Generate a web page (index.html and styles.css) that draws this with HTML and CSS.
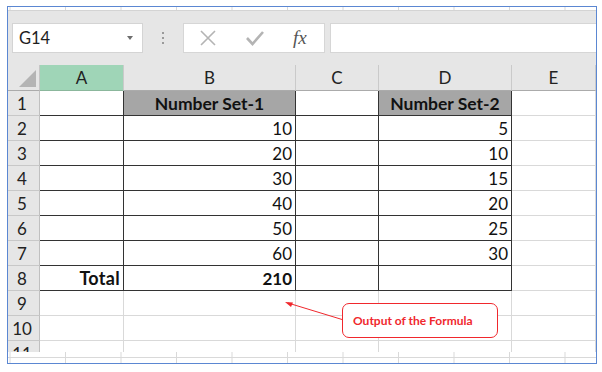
FILE: index.html
```html
<!DOCTYPE html>
<html lang="en">
<head>
  <meta charset="UTF-8" />
  <title>Sum</title>
  <link rel="stylesheet" href="styles.css">
</head>
<body>

<div class="frame">
  <div class="strip strip-top"></div>

  <div class="toolbar">
    <div class="namebox">
      <span>G14</span>
      <span class="caret"></span>
    </div>
    <div class="grip"><i></i><i></i><i></i></div>
    <div class="fbuttons">
      <svg class="ficon" width="18" height="18" viewBox="0 0 18 18">
        <path d="M2 2 L16 16 M16 2 L2 16" stroke="#b4b4b4" stroke-width="1.6" fill="none"/>
      </svg>
      <svg class="ficon" width="20" height="18" viewBox="0 0 20 18">
        <path d="M2 9 L7.5 15 L18 3" stroke="#b4b4b4" stroke-width="2.6" fill="none"/>
      </svg>
      <span class="fx">fx</span>
    </div>
    <div class="formula"></div>
  </div>

  <div class="sheet-wrap">
    <div class="sheet">
      <div class="corner"><span class="tri"></span></div>
      <div class="colhead active">A</div>
      <div class="colhead">B</div>
      <div class="colhead">C</div>
      <div class="colhead">D</div>
      <div class="colhead">E</div>

      <div class="rowhead">1</div>
      <div class="cell bd"></div>
      <div class="cell bd title">Number Set-1</div>
      <div class="cell bd"></div>
      <div class="cell bd title">Number Set-2</div>
      <div class="cell"></div>

      <div class="rowhead">2</div>
      <div class="cell bd"></div>
      <div class="cell bd num">10</div>
      <div class="cell bd"></div>
      <div class="cell bd num">5</div>
      <div class="cell"></div>

      <div class="rowhead">3</div>
      <div class="cell bd"></div>
      <div class="cell bd num">20</div>
      <div class="cell bd"></div>
      <div class="cell bd num">10</div>
      <div class="cell"></div>

      <div class="rowhead">4</div>
      <div class="cell bd"></div>
      <div class="cell bd num">30</div>
      <div class="cell bd"></div>
      <div class="cell bd num">15</div>
      <div class="cell"></div>

      <div class="rowhead">5</div>
      <div class="cell bd"></div>
      <div class="cell bd num">40</div>
      <div class="cell bd"></div>
      <div class="cell bd num">20</div>
      <div class="cell"></div>

      <div class="rowhead">6</div>
      <div class="cell bd"></div>
      <div class="cell bd num">50</div>
      <div class="cell bd"></div>
      <div class="cell bd num">25</div>
      <div class="cell"></div>

      <div class="rowhead">7</div>
      <div class="cell bd"></div>
      <div class="cell bd num">60</div>
      <div class="cell bd"></div>
      <div class="cell bd num">30</div>
      <div class="cell"></div>

      <div class="rowhead">8</div>
      <div class="cell bd num strong label">Total</div>
      <div class="cell bd num strong">210</div>
      <div class="cell bd"></div>
      <div class="cell bd"></div>
      <div class="cell"></div>

      <div class="rowhead">9</div>
      <div class="cell"></div>
      <div class="cell"></div>
      <div class="cell"></div>
      <div class="cell"></div>
      <div class="cell"></div>

      <div class="rowhead">10</div>
      <div class="cell"></div>
      <div class="cell"></div>
      <div class="cell"></div>
      <div class="cell"></div>
      <div class="cell"></div>

      <div class="rowhead">11</div>
      <div class="cell"></div>
      <div class="cell"></div>
      <div class="cell"></div>
      <div class="cell"></div>
      <div class="cell"></div>
    </div>

    <!-- annotation drawn over the grid -->
    <svg class="arrow" width="80" height="30" viewBox="0 0 80 30">
      <path d="M63 24 L4 6" stroke="#f0282d" stroke-width="1" fill="none"/>
      <path d="M1 5 L9 5.5 L7 10 Z" fill="#f0282d"/>
    </svg>
    <div class="callout">Output of the Formula</div>
  </div>

  <div class="strip strip-bottom"></div>
</div>

</body>
</html>
```

FILE: styles.css
```css
* {
  box-sizing: border-box;
}

body {
  margin: 0;
  background: #ffffff;
  font-family: 'Lato', 'Liberation Sans', sans-serif;
}

.frame {
  width: 590px;
  margin: 6px 0 0 7px;
  border: 1px solid #5b87d2;
  background: #ffffff;
}

/* faint gridline remnants at the top and bottom edge */
.strip {
  background-image: linear-gradient(to right, #d9d9d9 1px, transparent 1px);
  background-size: 55.5px 100%;
  background-position: 57px 0;
}

.strip-top {
  height: 4px;
  border-bottom: 1px solid #d4d4d4;
}

.strip-bottom {
  height: 11px;
  position: relative;
}

.strip-bottom::after {
  content: "";
  position: absolute;
  left: 0;
  right: 0;
  top: 5px;
  border-top: 1px solid #d9d9d9;
}

.toolbar {
  height: 54px;
  background: #e6e6e6;
  display: flex;
  align-items: flex-start;
  padding: 12px 0 0 4px;
}

.namebox {
  width: 131px;
  height: 30px;
  background: #ffffff;
  border: 1px solid #d4d4d4;
  display: flex;
  align-items: center;
  justify-content: space-between;
  padding: 0 9px 0 6px;
  font-size: 16.5px;
  color: #1e1e1e;
}

.caret {
  width: 0;
  height: 0;
  border-left: 3.5px solid transparent;
  border-right: 3.5px solid transparent;
  border-top: 4px solid #6d6d6d;
}

.grip {
  width: 40px;
  height: 30px;
  display: flex;
  flex-direction: column;
  align-items: center;
  justify-content: center;
  gap: 3px;
}

.grip i {
  display: block;
  width: 2px;
  height: 2px;
  background: #9a9a9a;
}

.fbuttons {
  width: 142px;
  height: 30px;
  background: #ffffff;
  border: 1px solid #d6d6d6;
  display: flex;
  align-items: center;
  padding: 0 0 0 15px;
  gap: 28px;
}

.fx {
  font-family: 'Liberation Serif', serif;
  font-style: italic;
  font-size: 19px;
  color: #555555;
}

.formula {
  flex: 1;
  height: 30px;
  margin-left: 5px;
  background: #ffffff;
  border: 1px solid #d6d6d6;
  border-right: none;
}

.sheet-wrap {
  position: relative;
  height: 287px;
  overflow: hidden;
}

.sheet {
  display: grid;
  grid-template-columns: 32px 84px 172px 83px 133px 84px;
  grid-template-rows: 26px;
  grid-auto-rows: 25px;
}

.corner {
  background: #e6e6e6;
  border-right: 1px solid #c6c6c6;
  border-bottom: 1px solid #ababab;
  position: relative;
}

.tri {
  position: absolute;
  right: 3px;
  bottom: 3px;
  width: 0;
  height: 0;
  border-left: 17px solid transparent;
  border-bottom: 17px solid #b4b4b4;
}

.colhead {
  background: #e6e6e6;
  border-right: 1px solid #cacaca;
  border-bottom: 1px solid #ababab;
  display: flex;
  align-items: flex-end;
  justify-content: center;
  padding-bottom: 2px;
  font-size: 17px;
  color: #222222;
}

.colhead.active {
  background: #9fd5b7;
  border-bottom-color: #8bb79c;
}

.rowhead {
  background: #e6e6e6;
  border-right: 1px solid #c0c0c0;
  border-bottom: 1px solid #c8c8c8;
  display: flex;
  align-items: center;
  justify-content: center;
  padding-right: 3px;
  font-size: 17px;
  color: #222222;
}

.cell {
  border-right: 1px solid #d9d9d9;
  border-bottom: 1px solid #d9d9d9;
  font-size: 17px;
  color: #111111;
  display: flex;
  align-items: center;
  padding: 0 3px;
}

.cell.bd {
  border-right: 1px solid #333333;
  border-bottom: 1px solid #333333;
}

.title {
  background: #a6a6a6;
  justify-content: center;
  font-weight: bold;
  font-size: 17.5px;
}

.num {
  justify-content: flex-end;
}

.strong {
  font-weight: bold;
}

.label {
  font-size: 18px;
  letter-spacing: 0.3px;
}

.arrow {
  position: absolute;
  left: 276px;
  top: 232px;
}

.callout {
  position: absolute;
  left: 334px;
  top: 238px;
  width: 156px;
  height: 35px;
  border: 1.5px solid #f0282d;
  border-radius: 7px;
  background: #ffffff;
  color: #f0282d;
  font-weight: bold;
  font-size: 12px;
  display: flex;
  align-items: center;
  padding: 0 0 1px 10px;
}
```
